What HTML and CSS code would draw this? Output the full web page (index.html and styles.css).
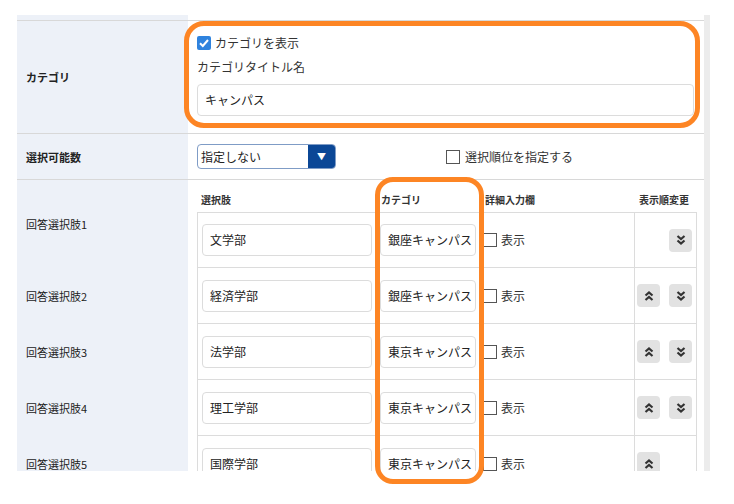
FILE: index.html
```html
<!DOCTYPE html>
<html lang="ja">
<head>
    <meta charset="UTF-8">
    <meta name="viewport" content="width=device-width, initial-scale=1.0">
    <title>回答選択肢の設定</title>
    <link rel="stylesheet" href="styles.css">
</head>
<body>
    <div class="panel">
        <div class="row tail">
            <div class="label"></div>
            <div class="cell"></div>
        </div>

        <div class="row">
            <div class="label bold">カテゴリ</div>
            <div class="cell cat-cell">
                <label class="check-line">
                    <span class="checkbox checked">
                        <svg viewBox="0 0 14 14" width="14" height="14"><path d="M3 7.2 L5.8 10 L11 4" fill="none" stroke="#fff" stroke-width="2"/></svg>
                    </span>
                    カテゴリを表示
                </label>
                <div class="field-title">カテゴリタイトル名</div>
                <div class="input wide">キャンパス</div>
            </div>
        </div>

        <div class="row">
            <div class="label bold">選択可能数</div>
            <div class="cell select-cell">
                <div class="select">
                    <span class="select-text">指定しない</span>
                    <span class="select-arrow">▼</span>
                </div>
                <label class="check-line order-check">
                    <span class="checkbox"></span>
                    選択順位を指定する
                </label>
            </div>
        </div>

        <div class="row opt">
            <div class="label">回答選択肢1</div>
            <div class="cell opt-cell">
                <div class="opt-head">
                    <span class="h-name">選択肢</span>
                    <span class="h-cat">カテゴリ</span>
                    <span class="h-detail">詳細入力欄</span>
                    <span class="h-order">表示順変更</span>
                </div>
                <div class="item first">
                    <div class="input name">文学部</div>
                    <div class="input cat">銀座キャンパス</div>
                    <label class="check-line"><span class="checkbox"></span>表示</label>
                    <div class="order">
                        <button class="move down"><svg viewBox="0 0 12 12" width="12" height="12"><path d="M2.5 2 L6 5 L9.5 2 M2.5 6.5 L6 9.5 L9.5 6.5" fill="none" stroke="#333" stroke-width="2.2"/></svg></button>
                    </div>
                </div>
            </div>
        </div>

        <div class="row opt">
            <div class="label">回答選択肢2</div>
            <div class="cell opt-cell">
                <div class="item">
                    <div class="input name">経済学部</div>
                    <div class="input cat">銀座キャンパス</div>
                    <label class="check-line"><span class="checkbox"></span>表示</label>
                    <div class="order">
                        <button class="move up"><svg viewBox="0 0 12 12" width="12" height="12"><path d="M2.5 5.5 L6 2.5 L9.5 5.5 M2.5 10 L6 7 L9.5 10" fill="none" stroke="#333" stroke-width="2.2"/></svg></button>
                        <button class="move down"><svg viewBox="0 0 12 12" width="12" height="12"><path d="M2.5 2 L6 5 L9.5 2 M2.5 6.5 L6 9.5 L9.5 6.5" fill="none" stroke="#333" stroke-width="2.2"/></svg></button>
                    </div>
                </div>
            </div>
        </div>

        <div class="row opt">
            <div class="label">回答選択肢3</div>
            <div class="cell opt-cell">
                <div class="item">
                    <div class="input name">法学部</div>
                    <div class="input cat">東京キャンパス</div>
                    <label class="check-line"><span class="checkbox"></span>表示</label>
                    <div class="order">
                        <button class="move up"><svg viewBox="0 0 12 12" width="12" height="12"><path d="M2.5 5.5 L6 2.5 L9.5 5.5 M2.5 10 L6 7 L9.5 10" fill="none" stroke="#333" stroke-width="2.2"/></svg></button>
                        <button class="move down"><svg viewBox="0 0 12 12" width="12" height="12"><path d="M2.5 2 L6 5 L9.5 2 M2.5 6.5 L6 9.5 L9.5 6.5" fill="none" stroke="#333" stroke-width="2.2"/></svg></button>
                    </div>
                </div>
            </div>
        </div>

        <div class="row opt">
            <div class="label">回答選択肢4</div>
            <div class="cell opt-cell">
                <div class="item">
                    <div class="input name">理工学部</div>
                    <div class="input cat">東京キャンパス</div>
                    <label class="check-line"><span class="checkbox"></span>表示</label>
                    <div class="order">
                        <button class="move up"><svg viewBox="0 0 12 12" width="12" height="12"><path d="M2.5 5.5 L6 2.5 L9.5 5.5 M2.5 10 L6 7 L9.5 10" fill="none" stroke="#333" stroke-width="2.2"/></svg></button>
                        <button class="move down"><svg viewBox="0 0 12 12" width="12" height="12"><path d="M2.5 2 L6 5 L9.5 2 M2.5 6.5 L6 9.5 L9.5 6.5" fill="none" stroke="#333" stroke-width="2.2"/></svg></button>
                    </div>
                </div>
            </div>
        </div>

        <div class="row opt">
            <div class="label">回答選択肢5</div>
            <div class="cell opt-cell">
                <div class="item">
                    <div class="input name">国際学部</div>
                    <div class="input cat">東京キャンパス</div>
                    <label class="check-line"><span class="checkbox"></span>表示</label>
                    <div class="order">
                        <button class="move up"><svg viewBox="0 0 12 12" width="12" height="12"><path d="M2.5 5.5 L6 2.5 L9.5 5.5 M2.5 10 L6 7 L9.5 10" fill="none" stroke="#333" stroke-width="2.2"/></svg></button>
                    </div>
                </div>
            </div>
        </div>
    </div>

    <!-- annotation frames -->
    <div class="mark mark-cat"></div>
    <div class="mark mark-col"></div>
</body>
</html>
```

FILE: styles.css
```css
body { margin: 0; background: #fff; font-family: "Noto Sans CJK JP", "Noto Sans", sans-serif; color: #333; }

.panel { margin: 15px 0 0 17px; width: 687px; height: 456px; overflow: hidden; border-right: 6px solid #ececec; }
.row { display: flex; border-bottom: 1px solid #d8d8d8; }
.row.opt { border-bottom: none; }
.row.tail { height: 5px; }
.label { width: 162px; padding-left: 9px; background: #edf1f8; display: flex; align-items: center; font-size: 11px; color: #222; flex-shrink: 0; }
.label.bold { font-weight: bold; }
.cell { flex: 1; padding-left: 9px; }

.cat-cell { padding: 13px 10px 17px 9px; display: flex; flex-direction: column; }
.check-line { display: flex; align-items: center; gap: 4px; font-size: 12px; line-height: 18px; color: #333; }
.checkbox { width: 14px; height: 14px; border: 1px solid #555; box-sizing: border-box; background: #fff; display: inline-block; flex-shrink: 0; }
.checkbox.checked { border: none; background: #2f83de; border-radius: 2px; }
.checkbox svg { display: block; }
.field-title { margin-top: 6px; font-size: 12px; line-height: 18px; color: #333; }

.input { height: 32px; box-sizing: border-box; border: 1px solid #dcdcdc; border-radius: 4px; background: #fff; padding-left: 7px; font-size: 12px; line-height: 30px; color: #222; white-space: nowrap; overflow: hidden; }
.input.wide { margin-top: 8px; }

.select-cell { height: 45px; display: flex; align-items: center; }
.select { width: 139px; height: 25px; box-sizing: border-box; border: 1px solid #7f9cc6; border-radius: 4px; display: flex; overflow: hidden; }
.select-text { flex: 1; padding-left: 3px; font-size: 12px; line-height: 23px; color: #222; }
.select-arrow { width: 27px; background: #0b4796; color: #fff; font-size: 9px; line-height: 23px; text-align: center; }
.order-check { margin-left: 110px; gap: 5px; }

.opt-cell { padding-right: 7px; }
.opt-head { height: 32px; display: flex; align-items: flex-end; padding-bottom: 5px; box-sizing: border-box; font-size: 10px; font-weight: bold; line-height: 14px; color: #333; }
.h-name { margin-left: 4px; width: 180px; }
.h-cat { width: 104px; }
.h-detail { width: 154px; }

.item { display: flex; align-items: center; height: 56px; box-sizing: border-box; border: 1px solid #dcdcdc; border-top: none; }
.item.first { border-top: 1px solid #dcdcdc; }
.input.name { width: 170px; margin-left: 4px; }
.input.cat { width: 96px; margin-left: 8px; }
.item .check-line { margin-left: 7px; gap: 4px; }
.order { margin-left: auto; align-self: stretch; width: 59px; border-left: 1px solid #dcdcdc; padding-left: 2px; display: grid; grid-template-columns: 23px 23px; column-gap: 9px; align-content: center; }
.move { width: 23px; height: 23px; border: none; border-radius: 4px; background: #e2e2e2; padding: 0; display: flex; align-items: center; justify-content: center; cursor: pointer; }
.move svg { display: block; }
.move.down { grid-column: 2; }
.move.up { grid-column: 1; }

.mark { position: absolute; border: 5px solid #fd8524; box-sizing: border-box; pointer-events: none; }
.mark-cat { left: 184px; top: 21px; width: 516px; height: 107px; border-radius: 20px; }
.mark-col { left: 375px; top: 177px; width: 109px; height: 307px; border-radius: 18px; }
```
